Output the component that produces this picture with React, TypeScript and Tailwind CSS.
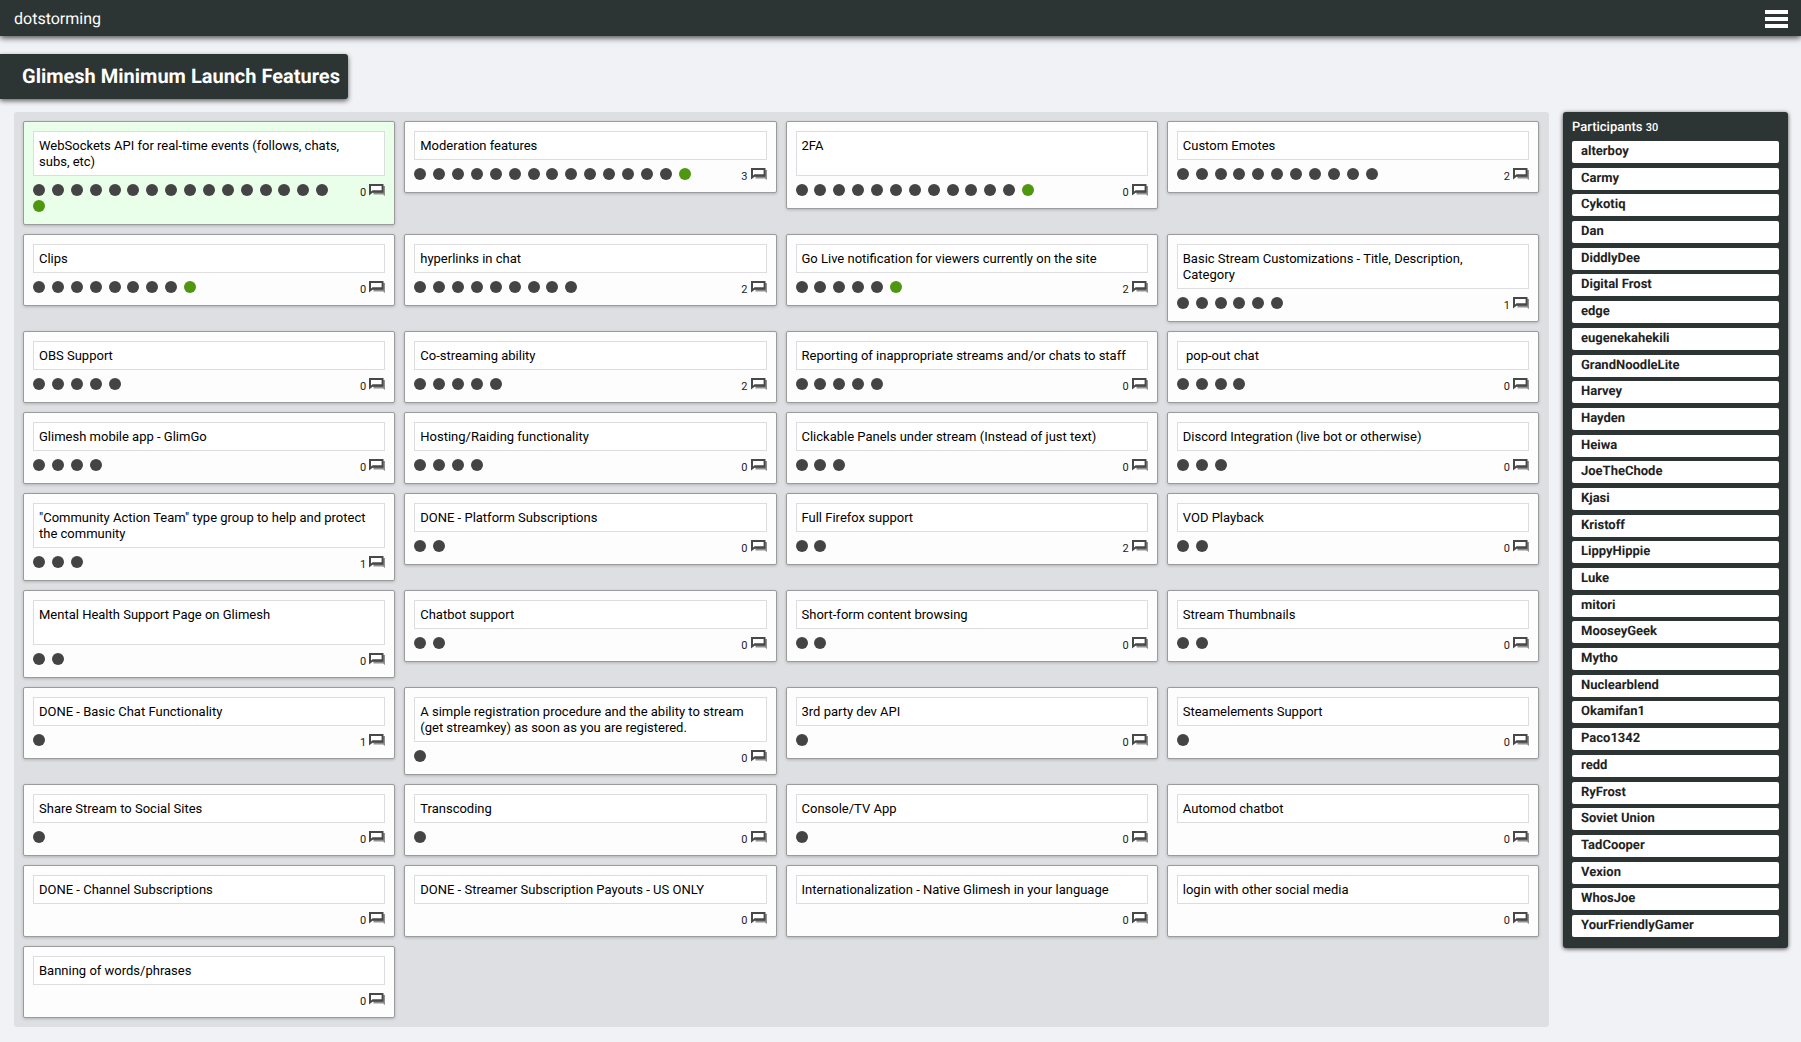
type Idea = {
  text: string;
  rows?: number;
  votes?: number;
  mine?: boolean;
  comments?: number;
  highlighted?: boolean;
};

const ideas: Idea[] = [
  { text: 'WebSockets API for real-time events (follows, chats,\nsubs, etc)', rows: 2, votes: 16, mine: true, highlighted: true },
  { text: 'Moderation features', votes: 14, mine: true, comments: 3 },
  { text: '2FA', rows: 2, votes: 12, mine: true },
  { text: 'Custom Emotes', votes: 11, comments: 2 },
  { text: 'Clips', votes: 8, mine: true },
  { text: 'hyperlinks in chat', votes: 9, comments: 2 },
  { text: 'Go Live notification for viewers currently on the site', votes: 5, mine: true, comments: 2 },
  { text: 'Basic Stream Customizations - Title, Description,\nCategory', rows: 2, votes: 6, comments: 1 },
  { text: 'OBS Support', votes: 5 },
  { text: 'Co-streaming ability', votes: 5, comments: 2 },
  { text: 'Reporting of inappropriate streams and/or chats to staff', votes: 5 },
  { text: ' pop-out chat', votes: 4 },
  { text: 'Glimesh mobile app - GlimGo', votes: 4 },
  { text: 'Hosting/Raiding functionality', votes: 4 },
  { text: 'Clickable Panels under stream (Instead of just text)', votes: 3 },
  { text: 'Discord Integration (live bot or otherwise)', votes: 3 },
  { text: '"Community Action Team" type group to help and protect\nthe community', rows: 2, votes: 3, comments: 1 },
  { text: 'DONE - Platform Subscriptions', votes: 2 },
  { text: 'Full Firefox support', votes: 2, comments: 2 },
  { text: 'VOD Playback', votes: 2 },
  { text: 'Mental Health Support Page on Glimesh', rows: 2, votes: 2 },
  { text: 'Chatbot support', votes: 2 },
  { text: 'Short-form content browsing', votes: 2 },
  { text: 'Stream Thumbnails', votes: 2 },
  { text: 'DONE - Basic Chat Functionality', votes: 1, comments: 1 },
  { text: 'A simple registration procedure and the ability to stream\n(get streamkey) as soon as you are registered.', rows: 2, votes: 1 },
  { text: '3rd party dev API', votes: 1 },
  { text: 'Steamelements Support', votes: 1 },
  { text: 'Share Stream to Social Sites', votes: 1 },
  { text: 'Transcoding', votes: 1 },
  { text: 'Console/TV App', votes: 1 },
  { text: 'Automod chatbot' },
  { text: 'DONE - Channel Subscriptions' },
  { text: 'DONE - Streamer Subscription Payouts - US ONLY' },
  { text: 'Internationalization - Native Glimesh in your language' },
  { text: 'login with other social media' },
  { text: 'Banning of words/phrases' },
];

const participants = [
  'alterboy', 'Carmy', 'Cykotiq', 'Dan', 'DiddlyDee', 'Digital Frost', 'edge', 'eugenekahekili',
  'GrandNoodleLite', 'Harvey', 'Hayden', 'Heiwa', 'JoeTheChode', 'Kjasi', 'Kristoff', 'LippyHippie',
  'Luke', 'mitori', 'MooseyGeek', 'Mytho', 'Nuclearblend', 'Okamifan1', 'Paco1342', 'redd', 'RyFrost',
  'Soviet Union', 'TadCooper', 'Vexion', 'WhosJoe', 'YourFriendlyGamer',
];

function CommentIcon() {
  return (
    <svg width="16" height="12" viewBox="0 0 16 12" aria-hidden="true">
      <path d="M14 2h2v10l-2-1.5H4.5V8H14z" fill="#8f8f8f" />
      <path d="M0 0h14.5v8.8H3.6L0 11.4z" fill="#484848" />
      <path d="M2 2h10.6v4.2H3.6L2 7.4z" fill="#fff" />
    </svg>
  );
}

function IdeaCard({ idea }: { idea: Idea }) {
  const { text, rows = 1, votes = 0, mine = false, comments = 0, highlighted = false } = idea;
  return (
    <article
      className={`rounded-[2px] border border-[#9b9b9b] px-[9px] pt-[9px] pb-2 shadow-[0_1px_3px_rgba(0,0,0,0.2)] ${
        highlighted ? 'bg-[#eaffea]' : 'bg-[#fdfdfd]'
      }`}
    >
      <textarea
        aria-label="Idea"
        readOnly
        rows={rows}
        defaultValue={text}
        className="block w-full resize-none overflow-hidden border border-[#dddde0] bg-white px-[5px] pt-[6px] pb-[5px] text-[13px] leading-4 text-black outline-none"
      />
      <div className="mt-2 flex items-start justify-between">
        <div className="grid min-h-4 w-[302px] grid-cols-16 gap-y-1">
          {Array.from({ length: votes }, (_, i) => (
            <span key={i} className="size-3 rounded-full bg-[#444]" />
          ))}
          {mine && <span className="mb-1 size-3 rounded-full bg-[#4f9711]" />}
        </div>
        <button type="button" aria-label={`${comments} comments`} className="flex h-3 items-start gap-[3px]">
          <span className="pt-[3px] text-[11px] leading-3 text-[#222]">{comments}</span>
          <CommentIcon />
        </button>
      </div>
    </article>
  );
}

export default function App() {
  return (
    <div className="min-h-screen bg-[#f1f2f6] pb-[15px] font-['Roboto',sans-serif] [text-rendering:geometricPrecision]">
      <header className="flex h-9 items-center justify-between bg-[#2c3534] pr-[13px] pl-[14px] text-white shadow-[0_2px_6px_rgba(0,0,0,0.7)]">
        <a href="#" className="pt-[2px] text-[16px] leading-5">dotstorming</a>
        <button type="button" aria-label="Menu" className="flex w-[23px] flex-col gap-[3px] pt-[2px]">
          <span className="h-1 bg-white" />
          <span className="h-1 bg-white" />
          <span className="h-1 bg-white" />
        </button>
      </header>

      <h1 className="mt-[18px] w-fit rounded-r-[3px] bg-[#2c3534] py-[10px] pr-2 pl-[22px] text-[20px] leading-[25px] font-bold text-white shadow-[0_2px_5px_rgba(0,0,0,0.6)]">
        Glimesh Minimum Launch Features
      </h1>

      <div className="mt-[13px] flex items-start gap-[14px] pr-[13px] pl-[14px]">
        <main className="grid min-w-0 flex-1 grid-cols-4 items-start gap-[9px] rounded-[3px] bg-[#dedfe3] py-[9px] pr-[10px] pl-[9px]">
          {ideas.map((idea) => (
            <IdeaCard key={idea.text} idea={idea} />
          ))}
        </main>

        <aside className="w-[225px] shrink-0 rounded-[3px] bg-[#2c3534] px-[9px] pt-[6px] pb-[11px] shadow-[0_1px_4px_rgba(0,0,0,0.7)]">
          <h2 className="text-[13px] leading-5 font-medium text-white">
            Participants <span className="text-[11px]">30</span>
          </h2>
          <ul className="mt-[3px] flex min-h-[796px] flex-col justify-between">
            {participants.map((name) => (
              <li key={name} className="rounded-[2px] bg-white px-[9px] text-[13px] leading-[22px] font-bold text-[#222]">
                {name}
              </li>
            ))}
          </ul>
        </aside>
      </div>
    </div>
  );
}
